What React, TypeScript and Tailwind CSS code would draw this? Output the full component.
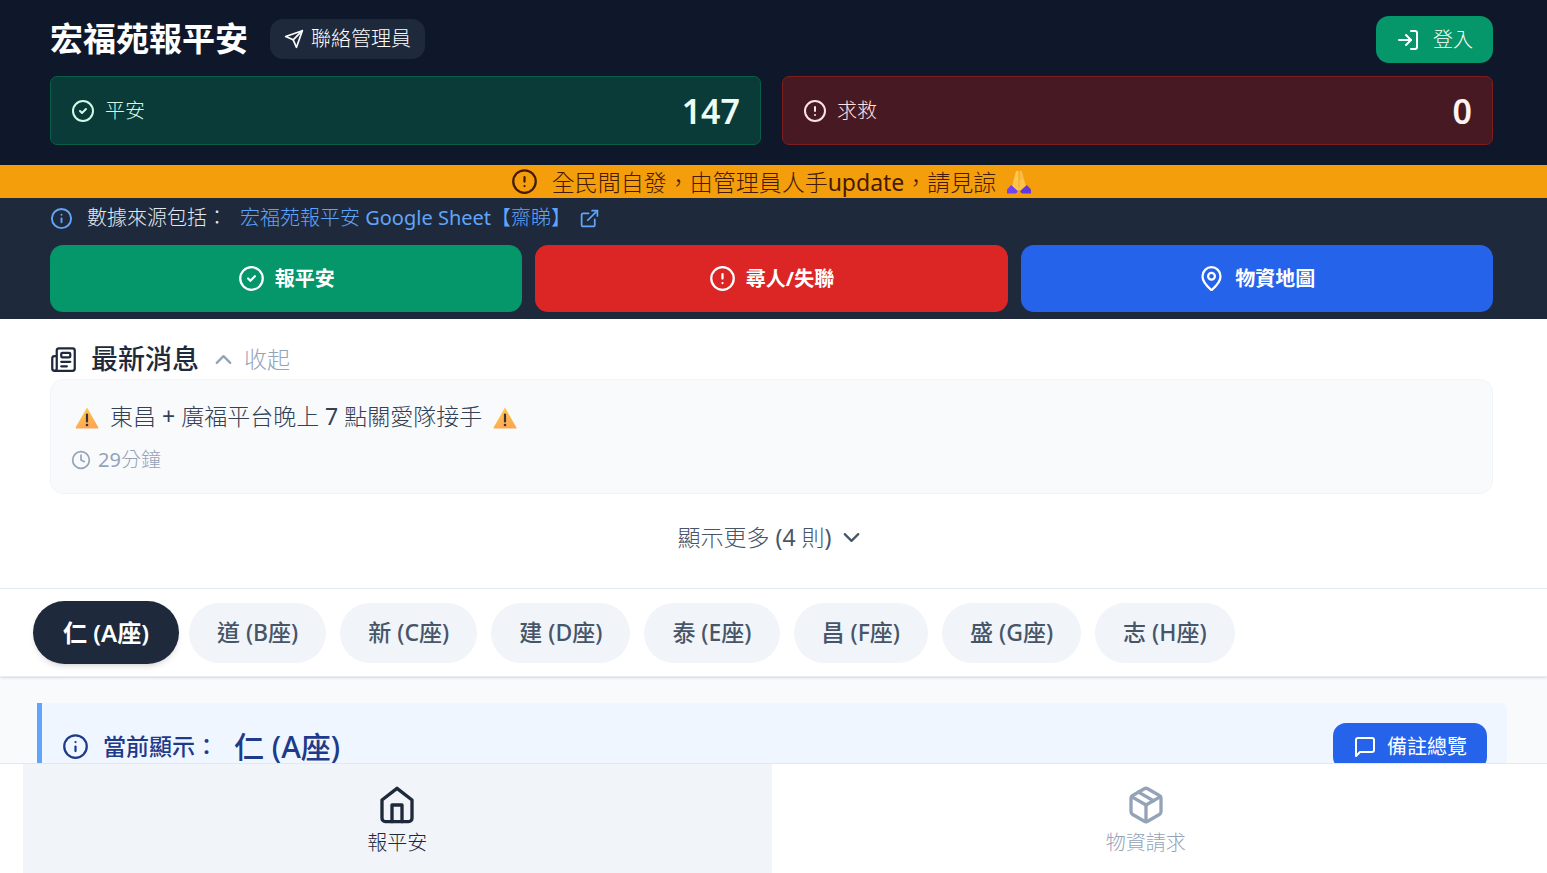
import React, { useState } from "react";
import {
  ChevronDown,
  ChevronUp,
  CircleAlert,
  CircleCheck,
  Clock,
  ExternalLink,
  Info,
  LogIn,
  MapPin,
  Newspaper,
  Package,
} from "lucide-react";

type IconProps = { className?: string };

const strokeProps = {
  viewBox: "0 0 24 24",
  fill: "none",
  stroke: "currentColor",
  strokeWidth: 2,
  strokeLinecap: "round" as const,
  strokeLinejoin: "round" as const,
};

const SendIcon = ({ className }: IconProps) => (
  <svg {...strokeProps} className={className}>
    <path d="m22 2-7 20-4-9-9-4Z" />
    <path d="M22 2 11 13" />
  </svg>
);

const HomeIcon = ({ className }: IconProps) => (
  <svg {...strokeProps} className={className}>
    <path d="m3 9 9-7 9 7v11a2 2 0 0 1-2 2H5a2 2 0 0 1-2-2z" />
    <path d="M9 22V12h6v10" />
  </svg>
);

const MessageIcon = ({ className }: IconProps) => (
  <svg {...strokeProps} className={className}>
    <path d="M21 15a2 2 0 0 1-2 2H7l-4 4V5a2 2 0 0 1 2-2h14a2 2 0 0 1 2 2z" />
  </svg>
);

const WarningIcon = () => (
  <svg viewBox="0 0 24 22" className="mt-[3px] h-[22px] w-6 shrink-0" role="img" aria-label="注意">
    <defs>
      <linearGradient id="warn" x1="0" y1="0" x2="0.4" y2="1">
        <stop offset="0" stopColor="#fbd04a" />
        <stop offset="1" stopColor="#ffa652" />
      </linearGradient>
    </defs>
    <path d="M12 0.6 23.4 20.6Q23.7 21.5 22.8 21.5H1.2Q0.3 21.5 0.6 20.6Z" fill="url(#warn)" />
    <rect x="10.9" y="6.5" width="2.2" height="9" rx="1.1" fill="#3b2f3d" />
    <circle cx="12" cy="18" r="1.3" fill="#3b2f3d" />
  </svg>
);

const PrayIcon = () => (
  <svg viewBox="0 0 26 26" className="h-[26px] w-[26px] shrink-0" role="img" aria-label="感謝">
    <path d="M12.8 2.4c-1.4-1.2-3-.4-3.3 1.6L7.6 12 6.2 18l4.3 4.500 2.500-2z" fill="#fdcb4e" />
    <path d="M13.2 2.4c1.4-1.2 3-.4 3.3 1.6l1.900 8 1.400 6-4.300 4.500-2.500-2z" fill="#fcbb45" />
    <path d="M6.200 17 13 21.500 19.800 17 18 11H8z" fill="#fdc34a" />
    <path d="M13 3v16" stroke="#eb9a35" strokeWidth="0.7" />
    <path d="M5.2 16 1 20.500V24.500h8.500q1.800-.4 2.300-2.600z" fill="#7045f0" />
    <path d="M20.800 16 25 20.500V24.500h-8.500q-1.800-.4-2.300-2.600z" fill="#6038e0" />
  </svg>
);

const actions = [
  { label: "報平安", icon: CircleCheck, color: "bg-[#059669]" },
  { label: "尋人/失聯", icon: CircleAlert, color: "bg-[#dc2626]" },
  { label: "物資地圖", icon: MapPin, color: "bg-[#2563eb]" },
];

const blocks = [
  "仁 (A座)",
  "道 (B座)",
  "新 (C座)",
  "建 (D座)",
  "泰 (E座)",
  "昌 (F座)",
  "盛 (G座)",
  "志 (H座)",
];

const Header = () => (
  <header className="shrink-0 bg-[#0f172a] pt-4 pr-[54px] pb-5 pl-[50px] text-white">
    <div className="flex items-center justify-between">
      <div className="flex items-center gap-[22px] pb-0.5">
        <h1 className="text-[33px] leading-10 font-bold">宏福苑報平安</h1>
        <button className="flex h-10 items-center gap-[7px] rounded-[13px] bg-[#1e293b] px-[14px] text-xl font-light">
          <SendIcon className="h-5 w-5" />
          聯絡管理員
        </button>
      </div>
      <button className="flex h-[47px] items-center gap-[13px] rounded-[13px] bg-[#059669] px-5 text-xl font-light">
        <LogIn size={24} />
        登入
      </button>
    </div>
    <div className="mt-[13px] grid grid-cols-2 gap-[21px]">
      <div className="flex h-[69px] items-center justify-between rounded-[7px] border border-[#065f46] bg-[#0b3b38] px-5">
        <div className="flex items-center gap-[10px] text-xl font-light text-[#d1fae5]">
          <CircleCheck size={24} />
          平安
        </div>
        <span className="text-[34px] leading-10 font-semibold text-[#ecfdf5]">147</span>
      </div>
      <div className="flex h-[69px] items-center justify-between rounded-[7px] border border-[#7f1d1d] bg-[#471a23] px-5">
        <div className="flex items-center gap-[10px] text-xl font-light text-[#fee2e2]">
          <CircleAlert size={24} />
          求救
        </div>
        <span className="text-[34px] leading-10 font-semibold text-[#fef2f2]">0</span>
      </div>
    </div>
  </header>
);

const SourceBar = () => (
  <section className="shrink-0 bg-[#1e293b] pr-[54px] pb-[7px] pl-[50px] text-white">
    <div className="flex h-[47px] items-start pt-[5px] text-xl leading-[30px] font-light">
      <Info size={23} className="mt-1 mr-[14px] text-[#60a5fa]" />
      <span className="mr-[13px] text-[#e2e8f0]">數據來源包括：</span>
      <a href="#sheet" className="flex items-center gap-2 text-[#60a5fa]">
        <span>
          宏福苑報平安 <span className="font-normal">Google Sheet</span>【齋睇】
        </span>
        <ExternalLink size={21} />
      </a>
    </div>
    <div className="grid grid-cols-3 gap-[13px]">
      {actions.map(({ label, icon: Icon, color }) => (
        <button
          key={label}
          className={`flex h-[67px] items-center justify-center gap-[10px] rounded-[13px] text-xl font-bold ${color}`}
        >
          <Icon size={27} />
          {label}
        </button>
      ))}
    </div>
  </section>
);

const News = () => (
  <section className="shrink-0 border-b border-[#e8edf3] bg-white pt-5 pr-[54px] pb-8 pl-[50px]">
    <div className="flex h-10 items-center">
      <Newspaper size={27} className="mr-[14px] text-[#1e293b]" />
      <h2 className="text-[27px] leading-10 font-medium text-[#1e293b]">最新消息</h2>
      <button className="ml-[11px] flex items-center gap-[7px] text-[23px] font-light text-[#94a3b8]">
        <ChevronUp size={27} />
        收起
      </button>
    </div>
    <article className="flex h-[115px] flex-col gap-[10px] rounded-[13px] border border-[#f1f5f9] bg-[#f8fafc] px-5 pt-[19px]">
      <p className="flex items-center gap-[11px] px-1 text-[23px] leading-[34px] font-light text-[#334155]">
        <WarningIcon />
        <span>
          東昌<span className="font-normal"> + </span>廣福平台晚上
          <span className="font-normal"> 7 </span>點關愛隊接手
        </span>
        <WarningIcon />
      </p>
      <p className="flex items-center gap-[7px] text-xl leading-[34px] font-light text-[#94a3b8]">
        <Clock size={20} />
        <span>
          <span className="font-normal">29</span>分鐘
        </span>
      </p>
    </article>
    <button className="mx-auto mt-6 flex h-[38px] items-center gap-[7px] text-[23px] font-light text-[#475569]">
      <span>
        顯示更多 <span className="font-normal">(4 </span>則<span className="font-normal">)</span>
      </span>
      <ChevronDown size={27} />
    </button>
  </section>
);

export default function App() {
  const [active, setActive] = useState(blocks[0]);

  return (
    <div className="flex h-screen flex-col overflow-hidden bg-[#f8fafc] font-['Noto_Sans','Noto_Sans_CJK_TC',sans-serif]">
      <main className="flex min-h-0 flex-1 flex-col overflow-y-auto [scrollbar-width:none]">
        <Header />
        <div className="flex h-[33px] shrink-0 items-center justify-center gap-[14px] bg-[#f59e0b] pr-1 text-[23px] leading-8 font-light text-[#451a03]">
          <CircleAlert size={27} />
          <div className="flex items-center gap-[10px]">
            <span>
              全民間自發，由管理員人手<span className="font-normal">update</span>，請見諒
            </span>
            <PrayIcon />
          </div>
        </div>
        <SourceBar />
        <News />

        {/* Block tabs */}
        <div className="z-10 flex h-[88px] shrink-0 items-center gap-[14px] overflow-x-auto border-b border-[#e8edf3] bg-white px-[37px] shadow-sm [scrollbar-width:none]">
          {blocks.map((block) => (
            <button
              key={block}
              onClick={() => setActive(block)}
              className={
                block === active
                  ? "-mx-1 h-[63px] shrink-0 rounded-full bg-[#1e293b] px-[30px] text-2xl font-semibold text-white shadow-md"
                  : "h-[60px] shrink-0 rounded-full bg-[#f1f5f9] px-7 text-[23px] font-medium text-[#475569]"
              }
            >
              {block}
            </button>
          ))}
        </div>

        <div className="shrink-0 pt-[26px] pr-10 pl-[37px]">
          <div className="flex items-center justify-between rounded-r-[7px] border-l-[5px] border-[#60a5fa] bg-[#eff6ff] px-5 py-5 text-[#1e3a8a]">
            <div className="flex h-[47px] items-center">
              <Info size={27} className="mr-[14px]" />
              <span className="text-[23px] font-medium">當前顯示：</span>
              <strong className="ml-4 text-[30px] leading-8 font-medium">{active}</strong>
            </div>
            <button className="flex h-[47px] items-center gap-[10px] rounded-[13px] bg-[#2563eb] px-5 text-xl text-white">
              <MessageIcon className="h-6 w-6" />
              備註總覽
            </button>
          </div>
        </div>
      </main>

      <nav className="grid h-[110px] shrink-0 grid-cols-2 border-t border-[#e2e8f0] bg-white pr-[27px] pl-[23px]">
        <button className="flex flex-col items-center bg-[#f1f5f9] pt-[21px] text-xl font-light text-[#1e293b]">
          <HomeIcon className="h-10 w-10" />
          <span className="mt-1">報平安</span>
        </button>
        <button className="flex flex-col items-center pt-[21px] text-xl font-light text-[#94a3b8]">
          <Package size={40} />
          <span className="mt-1">物資請求</span>
        </button>
      </nav>
    </div>
  );
}
